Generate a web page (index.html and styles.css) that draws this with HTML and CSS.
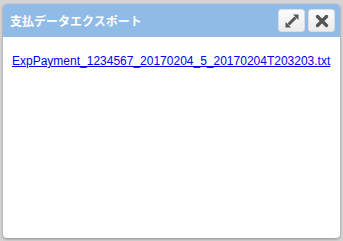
FILE: index.html
```html
<!DOCTYPE html>
<html>
<head>
<meta charset="utf-8">
<link rel="stylesheet" href="styles.css">
</head>
<body>
<div class="dialog">
  <div class="titlebar">
    <span class="title">支払データエクスポート</span>
    <div class="buttons">
      <button class="btn" aria-label="maximize">
        <svg width="16" height="16" viewBox="0 0 16 16">
          <path d="M9 1.5 H14.5 V7 Z" fill="#555"/>
          <path d="M1.5 9 V14.5 H7 Z" fill="#555"/>
          <path d="M11.5 4.5 L4.5 11.5" stroke="#555" stroke-width="3"/>
        </svg>
      </button>
      <button class="btn" aria-label="close">
        <svg width="14" height="14" viewBox="0 0 14 14">
          <path d="M2.5 2.5 L11.5 11.5 M11.5 2.5 L2.5 11.5" stroke="#555" stroke-width="3.4" stroke-linecap="round"/>
        </svg>
      </button>
    </div>
  </div>
  <div class="content">
    <a href="#" class="file">ExpPayment_1234567_20170204_5_20170204T203203.txt</a>
  </div>
</div>
</body>
</html>
```
FILE: styles.css
```css
html, body {
  margin: 0;
  padding: 0;
  width: 343px;
  height: 241px;
  overflow: hidden;
  background: #d4d4d4;
}
body {
  padding: 4px 3px 3px 3px;
  box-sizing: border-box;
}
.dialog {
  height: 234px;
  background: #fff;
  border-radius: 4px;
  box-shadow: 0 1px 3px rgba(0,0,0,0.35);
  overflow: hidden;
  display: flex;
  flex-direction: column;
}
.titlebar {
  height: 33px;
  background: #8fbbe6;
  display: flex;
  align-items: center;
  justify-content: space-between;
  padding: 0 5px 0 6px;
  flex: none;
}
.title {
  color: #fff;
  font-family: "Noto Sans CJK JP", sans-serif;
  font-weight: bold;
  font-size: 12px;
  padding-left: 1px;
}
.buttons {
  display: flex;
  gap: 3px;
}
.btn {
  width: 27px;
  height: 23px;
  padding: 0;
  margin: 0;
  border: 1px solid #dcdcdc;
  border-radius: 3px;
  background: linear-gradient(#fbfbfb, #ececec);
  display: flex;
  align-items: center;
  justify-content: center;
}
.content {
  padding: 14px 9px;
}
.file {
  font-family: "Liberation Sans", Arial, sans-serif;
  font-size: 12px;
  color: #0000ee;
  text-decoration: underline;
}
```
